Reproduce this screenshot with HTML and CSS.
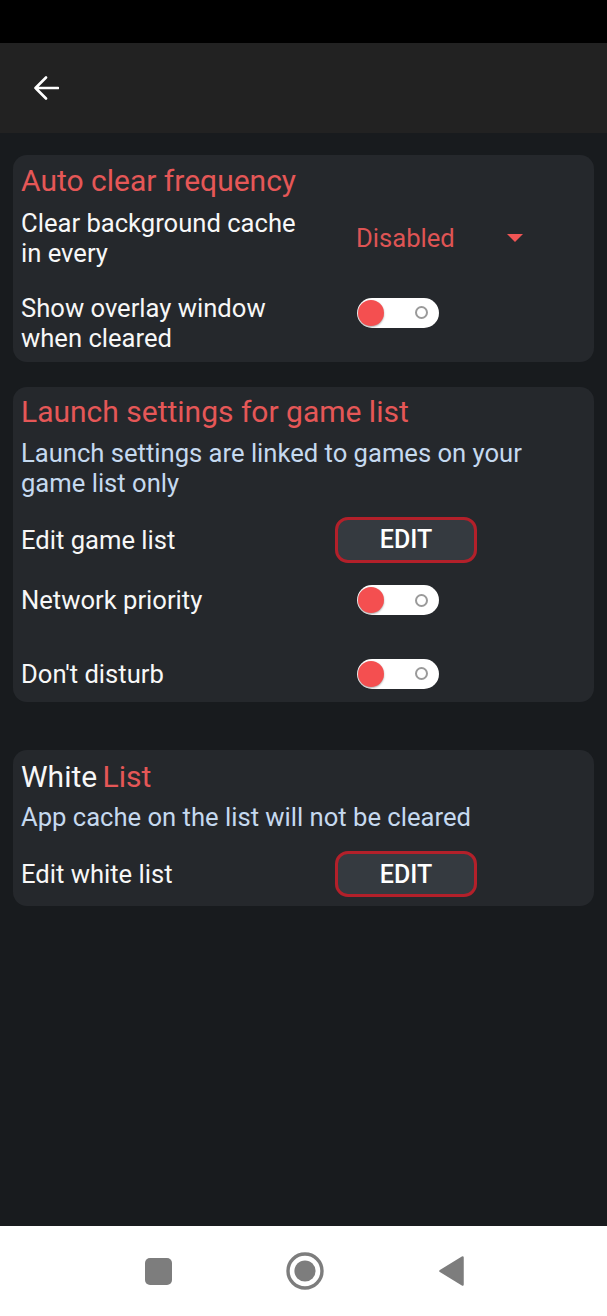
FILE: index.html
```html
<!DOCTYPE html>
<html lang="en">
<head>
<meta charset="utf-8">
<title>Settings</title>
<link rel="stylesheet" href="styles.css">
</head>
<body>
<div class="status"></div>
<header class="toolbar">
  <svg class="back" width="26" height="26" viewBox="0 0 26 26" aria-label="Back">
    <path d="M25 13H2.5M13 2.5L2.5 13L13 23.5" fill="none" stroke="#ffffff" stroke-width="2.6" stroke-linecap="round" stroke-linejoin="round"/>
  </svg>
</header>
<main class="content">
  <section class="card card-auto">
    <h2 class="title">Auto clear frequency</h2>
    <div class="row row-first">
      <div class="label">Clear background cache in every</div>
      <div class="dropdown">
        <span class="dropdown-value">Disabled</span>
        <svg class="caret" width="16" height="8" viewBox="0 0 16 8"><path d="M0 0H16L8 8Z" fill="#f05555"/></svg>
      </div>
    </div>
    <div class="row row-overlay">
      <div class="label">Show overlay window when cleared</div>
      <div class="toggle toggle-top"><span class="knob"></span><span class="ring"></span></div>
    </div>
  </section>

  <section class="card card-launch">
    <h2 class="title">Launch settings for game list</h2>
    <p class="subtitle">Launch settings are linked to games on your game list only</p>
    <div class="row row-edit">
      <div class="label">Edit game list</div>
      <button class="edit">EDIT</button>
    </div>
    <div class="row row-switch row-network">
      <div class="label">Network priority</div>
      <div class="toggle"><span class="knob"></span><span class="ring"></span></div>
    </div>
    <div class="row row-switch row-disturb">
      <div class="label">Don't disturb</div>
      <div class="toggle"><span class="knob"></span><span class="ring"></span></div>
    </div>
  </section>

  <section class="card card-white">
    <h2 class="title title-white"><span class="plain">White</span> List</h2>
    <p class="subtitle subtitle-white">App cache on the list will not be cleared</p>
    <div class="row row-edit row-edit-white">
      <div class="label">Edit white list</div>
      <button class="edit">EDIT</button>
    </div>
  </section>
</main>
<nav class="navbar">
  <span class="nav-square"></span>
  <svg class="nav-home" width="38" height="38" viewBox="0 0 38 38"><circle cx="19" cy="19" r="17" fill="none" stroke="#7d7d7d" stroke-width="3.4"/><circle cx="19" cy="19" r="10.6" fill="#7d7d7d"/></svg>
  <svg class="nav-back" width="27" height="32" viewBox="0 0 27 32"><path d="M24.5 2.5L2.5 16L24.5 29.5Z" fill="#7d7d7d" stroke="#7d7d7d" stroke-width="2.5" stroke-linejoin="round"/></svg>
</nav>
</body>
</html>
```

FILE: styles.css
```css
* { box-sizing: border-box; }
html, body { margin: 0; padding: 0; }
body {
  width: 607px;
  height: 1316px;
  display: flex;
  flex-direction: column;
  background: #181b1e;
  font-family: Roboto, "Noto Sans", "Liberation Sans", sans-serif;
  color: #f7f7f7;
  overflow: hidden;
}
.status { height: 43px; background: #000; flex: 0 0 auto; }
.toolbar {
  height: 90px;
  flex: 0 0 auto;
  background: #222222;
  display: flex;
  align-items: center;
  padding-left: 33px;
}
.back { display: block; }
.content {
  flex: 1 1 auto;
  padding: 22px 13px 0;
}
.card {
  background: #25282c;
  border-radius: 14px;
  padding: 8.4px 9px 9px 8px;
}
.card-launch { margin-top: 25px; padding-top: 7.6px; padding-bottom: 4px; }
.card-white { margin-top: 48.5px; padding-top: 8.6px; padding-bottom: 8.5px; }
.title {
  margin: 0;
  font-size: 30px;
  line-height: 36px;
  font-weight: 400;
  color: #e55757;
}
.title-white { word-spacing: -2px; }
.title .plain { color: #f7f7f7; }
.subtitle {
  margin: 8px 0 0;
  font-size: 25.6px;
  line-height: 30px;
  color: #c5d9ef;
}
.subtitle-white { margin-top: 7px; }
.row {
  display: flex;
  align-items: center;
  font-size: 25.6px;
  line-height: 30px;
}
.label { width: 290px; margin-right: 24px; flex: 0 0 auto; }
.row-first { margin-top: 8.5px; }
.row-overlay { margin-top: 25px; }
.row-edit { margin-top: 18.5px; }
.row-edit-white { margin-top: 19px; }
.row-switch { height: 48px; }
.row-network { margin-top: 13.5px; }
.row-disturb { margin-top: 25.5px; }

.dropdown { display: flex; align-items: center; margin-left: 21px; }
.dropdown-value { color: #de5454; }
.caret { display: block; margin-left: 52px; margin-top: 1px; }

.toggle {
  position: relative;
  width: 82px;
  height: 30px;
  margin-left: 21.5px;
  border-radius: 15px;
  background: #ffffff;
  flex: 0 0 auto;
}
.toggle-top { align-self: flex-start; margin-top: 5px; }
.knob {
  position: absolute;
  left: 1px;
  top: 2px;
  width: 26px;
  height: 26px;
  border-radius: 50%;
  background: #f44f50;
  box-shadow: 0 1px 2px rgba(0, 0, 0, 0.35);
}
.ring {
  position: absolute;
  left: 58.5px;
  top: 8.5px;
  width: 13px;
  height: 13px;
  border-radius: 50%;
  border: 2px solid #9a9a9a;
}

.edit {
  width: 142px;
  height: 46px;
  border: 3px solid #b3202a;
  border-radius: 13px;
  background: #353a40;
  color: #ffffff;
  font-family: Roboto, "Noto Sans", "Liberation Sans", sans-serif;
  font-size: 25px;
  font-weight: 500;
  line-height: 1;
  padding: 0;
}

.navbar {
  height: 90px;
  flex: 0 0 auto;
  background: #ffffff;
  display: flex;
  align-items: center;
  justify-content: center;
  gap: 114px;
  padding-left: 2px;
}
.nav-square {
  width: 27px;
  height: 27px;
  border-radius: 5px;
  background: #7d7d7d;
  display: block;
}
.nav-home, .nav-back { display: block; }
```
